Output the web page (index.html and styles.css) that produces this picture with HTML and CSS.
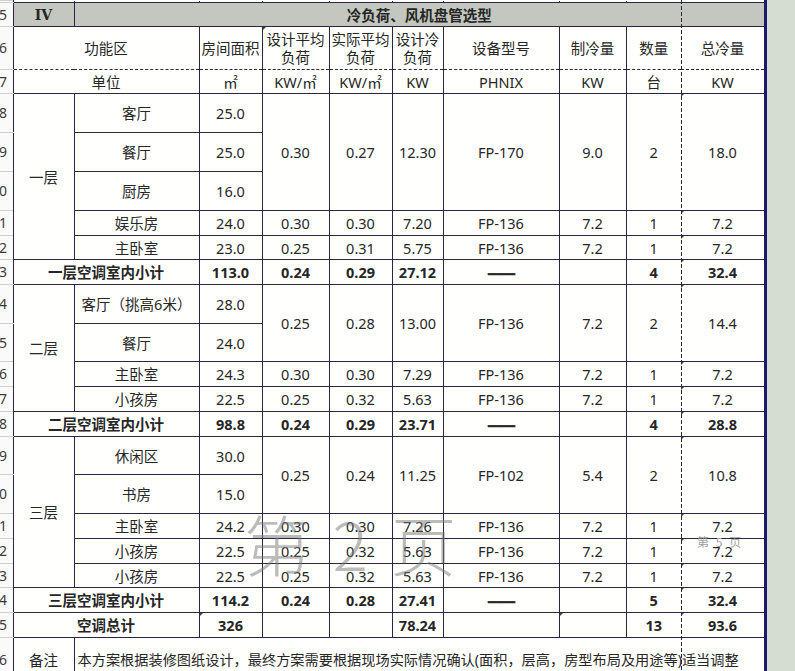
FILE: index.html
```html
<!DOCTYPE html>
<html lang="zh-CN">
<head>
<meta charset="utf-8">
<title>冷负荷、风机盘管选型</title>
<link rel="stylesheet" href="styles.css">
</head>
<body>
<div class="screen">
  <div class="sheet">
    <table class="grid">
      <colgroup>
        <col class="c-n"><col class="c-a"><col class="c-b"><col class="c-c"><col class="c-d"><col class="c-e"><col class="c-f"><col class="c-g"><col class="c-h"><col class="c-i"><col class="c-j">
      </colgroup>
      <tbody>
        <tr class="h2 top"><td class="n"></td><td></td><td></td><td></td><td></td><td></td><td></td><td></td><td></td><td></td><td></td></tr>
        <tr class="h24"><td class="n"><div class="rn">5</div></td><td class="gt b iv">IV</td><td class="gt b" colspan="9">冷负荷、风机盘管选型</td></tr>
        <tr class="h43 head"><td class="n"><div class="rn">6</div></td><td colspan="2">功能区</td><td>房间面积</td><td class="two mk">设计平均<br>负荷</td><td class="two">实际平均<br>负荷</td><td class="two">设计冷<br>负荷</td><td>设备型号</td><td>制冷量</td><td>数量</td><td>总冷量</td></tr>
        <tr class="h24 unit"><td class="n"><div class="rn">7</div></td><td colspan="2">单位</td><td>㎡</td><td>KW/㎡</td><td>KW/㎡</td><td>KW</td><td>PHNIX</td><td>KW</td><td>台</td><td>KW</td></tr>

        <tr class="h39"><td class="n"><div class="rn">8</div></td><td rowspan="5">一层</td><td>客厅</td><td>25.0</td><td rowspan="3">0.30</td><td rowspan="3">0.27</td><td rowspan="3">12.30</td><td rowspan="3">FP-170</td><td rowspan="3">9.0</td><td rowspan="3">2</td><td rowspan="3" class="mk">18.0</td></tr>
        <tr class="h39"><td class="n"><div class="rn">9</div></td><td>餐厅</td><td>25.0</td></tr>
        <tr class="h39"><td class="n"><div class="rn">10</div></td><td>厨房</td><td>16.0</td></tr>
        <tr class="h25"><td class="n"><div class="rn">11</div></td><td>娱乐房</td><td>24.0</td><td>0.30</td><td>0.30</td><td>7.20</td><td>FP-136</td><td>7.2</td><td>1</td><td class="mk">7.2</td></tr>
        <tr class="h24"><td class="n"><div class="rn">12</div></td><td>主卧室</td><td>23.0</td><td>0.25</td><td>0.31</td><td>5.75</td><td>FP-136</td><td>7.2</td><td>1</td><td class="mk">7.2</td></tr>
        <tr class="h25 b"><td class="n"><div class="rn">13</div></td><td colspan="2">一层空调室内小计</td><td>113.0</td><td>0.24</td><td>0.29</td><td>27.12</td><td class="dash">——</td><td></td><td>4</td><td class="mk">32.4</td></tr>

        <tr class="h39"><td class="n"><div class="rn">14</div></td><td rowspan="4">二层</td><td>客厅（挑高6米）</td><td>28.0</td><td rowspan="2">0.25</td><td rowspan="2">0.28</td><td rowspan="2">13.00</td><td rowspan="2">FP-136</td><td rowspan="2">7.2</td><td rowspan="2">2</td><td rowspan="2" class="mk">14.4</td></tr>
        <tr class="h38"><td class="n"><div class="rn">15</div></td><td>餐厅</td><td>24.0</td></tr>
        <tr class="h25"><td class="n"><div class="rn">16</div></td><td>主卧室</td><td>24.3</td><td>0.30</td><td>0.30</td><td>7.29</td><td>FP-136</td><td>7.2</td><td>1</td><td class="mk">7.2</td></tr>
        <tr class="h25"><td class="n"><div class="rn">17</div></td><td>小孩房</td><td>22.5</td><td>0.25</td><td>0.32</td><td>5.63</td><td>FP-136</td><td>7.2</td><td>1</td><td class="mk">7.2</td></tr>
        <tr class="h25 b"><td class="n"><div class="rn">18</div></td><td colspan="2">二层空调室内小计</td><td>98.8</td><td>0.24</td><td>0.29</td><td>23.71</td><td class="dash">——</td><td></td><td>4</td><td class="mk">28.8</td></tr>

        <tr class="h38"><td class="n"><div class="rn">19</div></td><td rowspan="5">三层</td><td>休闲区</td><td>30.0</td><td rowspan="2">0.25</td><td rowspan="2">0.24</td><td rowspan="2">11.25</td><td rowspan="2">FP-102</td><td rowspan="2">5.4</td><td rowspan="2">2</td><td rowspan="2" class="mk">10.8</td></tr>
        <tr class="h39"><td class="n"><div class="rn">20</div></td><td>书房</td><td>15.0</td></tr>
        <tr class="h25"><td class="n"><div class="rn">21</div></td><td>主卧室</td><td>24.2</td><td>0.30</td><td>0.30</td><td>7.26</td><td>FP-136</td><td>7.2</td><td>1</td><td class="mk">7.2</td></tr>
        <tr class="h25"><td class="n"><div class="rn">22</div></td><td>小孩房</td><td>22.5</td><td>0.25</td><td>0.32</td><td>5.63</td><td>FP-136</td><td>7.2</td><td>1</td><td class="mk">7.2</td></tr>
        <tr class="h24"><td class="n"><div class="rn">23</div></td><td>小孩房</td><td>22.5</td><td>0.25</td><td>0.32</td><td>5.63</td><td>FP-136</td><td>7.2</td><td>1</td><td class="mk">7.2</td></tr>
        <tr class="h25 b"><td class="n"><div class="rn">24</div></td><td colspan="2">三层空调室内小计</td><td>114.2</td><td>0.24</td><td>0.28</td><td>27.41</td><td class="dash">——</td><td></td><td>5</td><td class="mk">32.4</td></tr>
        <tr class="h25 b"><td class="n"><div class="rn">25</div></td><td colspan="2">空调总计</td><td class="mk">326</td><td></td><td></td><td>78.24</td><td></td><td class="mk"></td><td>13</td><td class="mk">93.6</td></tr>
        <tr class="h44"><td class="n"><div class="rn">26</div></td><td>备注</td><td colspan="9" class="rm">本方案根据装修图纸设计，最终方案需要根据现场实际情况确认(面积，层高，房型布局及用途等)适当调整</td></tr>
      </tbody>
    </table>
    <div class="pagebreak"></div>
    <div class="wm">第 2 页</div>
    <div class="wm-s">第 5 页</div>
  </div>
  <div class="side"></div>
</div>
</body>
</html>
```
FILE: styles.css
```css
html, body {
  margin: 0;
  padding: 0;
}
body {
  width: 795px;
  height: 671px;
  overflow: hidden;
  background: #fff;
  font-family: "Noto Sans", "Noto Sans CJK SC", sans-serif;
  font-size: 14.5px;
  color: #262626;
}
.screen {
  display: flex;
  height: 671px;
}
.sheet {
  position: relative;
  flex: none;
  width: 764px;
  height: 671px;
  overflow: hidden;
  background: #fffffd;
  border-right: 3px solid #1d1a6b;
}
.side {
  flex: 1;
  background: #d5dcd2;
}
.grid {
  border-collapse: collapse;
  table-layout: fixed;
  width: 764px;
}
.c-n { width: 13px; }
.c-a { width: 61px; }
.c-b { width: 125px; }
.c-c { width: 63px; }
.c-d { width: 67px; }
.c-e { width: 63px; }
.c-f { width: 51px; }
.c-g { width: 116px; }
.c-h { width: 67px; }
.c-i { width: 55px; border-right: 1px hidden; }
.c-j { width: 83px; border-right: 1px hidden; }

.grid td {
  border: 1px solid #2a2540;
  padding: 0;
  text-align: center;
  vertical-align: middle;
  line-height: 18px;
  white-space: nowrap;
  overflow: hidden;
}
.grid td.n {
  border-left: none;
  border-top: 1px solid #d0d0d0;
  border-bottom: 1px solid #d0d0d0;
  border-right: 1px solid #2a2540;
  background: #fafafa;
}
.rn {
  width: 13px;
  overflow: hidden;
  direction: rtl;
  text-align: right;
  padding-right: 4px;
  box-sizing: border-box;
  font-size: 14px;
  font-weight: 400;
  color: #3a3a3a;
  letter-spacing: 2px;
}
.top td { border-top: none; }

.h2 { height: 2px; }
.h24 { height: 24px; }
.h25 { height: 25px; }
.h38 { height: 38px; }
.h39 { height: 39px; }
.h43 { height: 43px; }
.h44 { height: 44px; }

.b td, td.b { font-weight: 700; }
.b td.n { font-weight: 400; }
.gt { background: #c4c7bf; }
.iv { font-family: "DejaVu Serif", "Liberation Serif", serif; font-size: 14px; }
.two { line-height: 21px; }
.head td:not(.n) { border-bottom-style: dashed; }
.unit td:not(.n) { border-top-style: dashed; }
.dash {
  letter-spacing: -1px;
  -webkit-text-stroke: 0.7px #262626;
}
.grid td.rm {
  text-align: left;
  padding-left: 3px;
  font-size: 14.2px;
}
.mk { position: relative; }
.mk::before {
  content: "";
  position: absolute;
  left: 0;
  top: 0;
  border-top: 3px solid #3a4a30;
  border-right: 3px solid transparent;
}

.pagebreak {
  position: absolute;
  left: 681px;
  top: 0;
  width: 1px;
  height: 671px;
  background: repeating-linear-gradient(to bottom, #2a2540 0 4px, transparent 4px 6px);
}
.wm {
  position: absolute;
  left: 244px;
  top: 502px;
  font-family: "Noto Sans CJK SC", sans-serif;
  font-size: 66px;
  font-weight: 300;
  line-height: 80px;
  color: rgba(120, 120, 120, 0.5);
  word-spacing: 8px;
  white-space: nowrap;
  pointer-events: none;
}
.wm-s {
  position: absolute;
  left: 697px;
  top: 534px;
  font-family: "Noto Sans CJK SC", sans-serif;
  font-size: 12px;
  line-height: 16px;
  color: #a0a0a0;
  word-spacing: 4px;
  white-space: nowrap;
}
```
